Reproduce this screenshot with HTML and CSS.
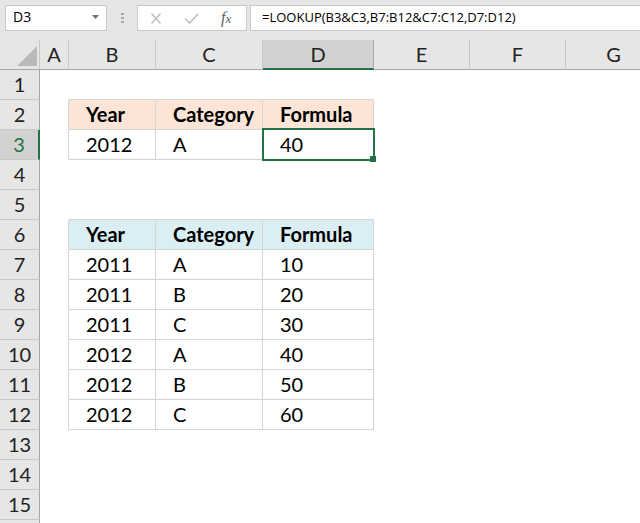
FILE: index.html
```html
<!DOCTYPE html>
<html>
<head>
<meta charset="utf-8">
<link rel="stylesheet" href="styles.css">
</head>
<body>
<div class="toolbar">
  <div class="namebox"><span>D3</span><svg class="caret" width="7" height="4" viewBox="0 0 7 4"><path d="M0 0h7L3.5 4z" fill="#707070"/></svg></div>
  <div class="grip"><i></i><i></i><i></i></div>
  <div class="fxbox">
    <svg class="ico-x" width="12" height="11" viewBox="0 0 12 11"><path d="M1.5 0.5l9 10M10.5 0.5l-9 10" stroke="#bdbdbd" stroke-width="1.4" fill="none"/></svg>
    <svg class="ico-check" width="15" height="11" viewBox="0 0 15 11"><path d="M1 5.5l4.5 4.5L14 1" stroke="#bdbdbd" stroke-width="1.6" fill="none"/></svg>
    <span class="fx">f<span class="fxx">x</span></span>
  </div>
  <div class="formula">=LOOKUP(B3&amp;C3,B7:B12&amp;C7:C12,D7:D12)</div>
</div>
<div class="sheet">
  <div class="corner"><svg width="20" height="20" viewBox="0 0 20 20"><path d="M20 0V20H0z" fill="#b9b9b9"/></svg></div>
  <div class="ch">A</div><div class="ch">B</div><div class="ch">C</div><div class="ch sel">D</div><div class="ch">E</div><div class="ch">F</div><div class="ch">G</div>

  <div class="rh">1</div><div></div><div class="tt"></div><div class="tt"></div><div class="tt"></div><div></div><div></div><div></div>

  <div class="rh">2</div><div class="tl"></div><div class="t th1">Year</div><div class="t th1">Category</div><div class="t th1">Formula</div><div></div><div></div><div></div>

  <div class="rh sel">3</div><div class="tl"></div><div class="t">2012</div><div class="t">A</div><div class="t active">40<span class="selbox"><span class="handle"></span></span></div><div></div><div></div><div></div>

  <div class="rh">4</div><div></div><div></div><div></div><div></div><div></div><div></div><div></div>

  <div class="rh">5</div><div></div><div class="tt"></div><div class="tt"></div><div class="tt"></div><div></div><div></div><div></div>

  <div class="rh">6</div><div class="tl"></div><div class="t th2">Year</div><div class="t th2">Category</div><div class="t th2">Formula</div><div></div><div></div><div></div>

  <div class="rh">7</div><div class="tl"></div><div class="t">2011</div><div class="t">A</div><div class="t">10</div><div></div><div></div><div></div>

  <div class="rh">8</div><div class="tl"></div><div class="t">2011</div><div class="t">B</div><div class="t">20</div><div></div><div></div><div></div>

  <div class="rh">9</div><div class="tl"></div><div class="t">2011</div><div class="t">C</div><div class="t">30</div><div></div><div></div><div></div>

  <div class="rh">10</div><div class="tl"></div><div class="t">2012</div><div class="t">A</div><div class="t">40</div><div></div><div></div><div></div>

  <div class="rh">11</div><div class="tl"></div><div class="t">2012</div><div class="t">B</div><div class="t">50</div><div></div><div></div><div></div>

  <div class="rh">12</div><div class="tl"></div><div class="t">2012</div><div class="t">C</div><div class="t">60</div><div></div><div></div><div></div>

  <div class="rh">13</div><div></div><div></div><div></div><div></div><div></div><div></div><div></div>

  <div class="rh">14</div><div></div><div></div><div></div><div></div><div></div><div></div><div></div>

  <div class="rh">15</div><div></div><div></div><div></div><div></div><div></div><div></div><div></div>

  <div class="rh"></div><div></div><div></div><div></div><div></div><div></div><div></div><div></div>
</div>
</body>
</html>
```

FILE: styles.css
```css
* { box-sizing: border-box; }

html, body {
  margin: 0;
  padding: 0;
  background: #fff;
  overflow: hidden;
}

body {
  width: 640px;
  height: 523px;
  font-family: Lato, "Liberation Sans", sans-serif;
  color: #000;
}

/* ---------- formula bar ---------- */
.toolbar {
  display: flex;
  align-items: flex-start;
  height: 40px;
  padding-top: 5px;
  background: #e6e6e6;
}

.namebox {
  display: flex;
  align-items: center;
  width: 102px;
  height: 26px;
  margin-left: 5px;
  padding: 0 7px 2px 7px;
  background: #fff;
  border: 1px solid #c8c8c8;
  font-family: "Open Sans", "Noto Sans", sans-serif;
  font-size: 14px;
  line-height: 22px;
}

.caret { margin-left: auto; }

.grip {
  display: flex;
  flex-direction: column;
  align-items: center;
  gap: 2px;
  width: 30px;
  padding-top: 8px;
}

.grip i {
  display: block;
  width: 3px;
  height: 2px;
  background: #a8a8a8;
}

.fxbox {
  display: flex;
  align-items: center;
  width: 110px;
  height: 26px;
  background: #fff;
  border: 1px solid #c8c8c8;
}

.ico-x { margin-left: 12px; }
.ico-check { margin-left: 22px; }

.fx {
  margin-left: 22px;
  font-family: "Liberation Serif", serif;
  font-style: italic;
  font-size: 16px;
  line-height: 16px;
  color: #5e5e5e;
}

.fxx { font-size: 13px; }

.formula {
  flex: 1;
  height: 26px;
  margin-left: 3px;
  padding-left: 11px;
  background: #fff;
  border: 1px solid #c8c8c8;
  border-right: none;
  font-family: "Open Sans", "Noto Sans", sans-serif;
  font-size: 13px;
  line-height: 23px;
  white-space: nowrap;
}

/* ---------- sheet grid ---------- */
.sheet {
  display: grid;
  grid-template-columns: 40px 29px 87px 107px 111px 96px 96px 96px;
  grid-auto-rows: 30px;
  font-size: 20px;
  line-height: 29px;
}

.sheet > div {
  border-right: 1px solid transparent;
  border-bottom: 1px solid transparent;
  white-space: nowrap;
}

.sheet > .corner {
  display: flex;
  justify-content: flex-end;
  align-items: flex-end;
  padding: 0 2px 3px 0;
  background: #e6e6e6;
  border-right-color: #c8c8c8;
  border-bottom-color: #a6a6a6;
}

.sheet > .ch {
  text-align: center;
  background: #e6e6e6;
  color: #222;
  border-right-color: #c8c8c8;
  border-bottom-color: #a6a6a6;
}

.sheet > .ch.sel {
  background: #d2d2d2;
  border-bottom: 2px solid #217346;
  border-right-color: #a6a6a6;
}

.sheet > .rh {
  text-align: center;
  background: #e6e6e6;
  color: #222;
  border-right-color: #a6a6a6;
  border-bottom-color: #c8c8c8;
}

.sheet > .rh.sel {
  background: #d2d2d2;
  color: #217346;
  border-right: 2px solid #217346;
}

/* table borders */
.sheet > .tt { border-bottom-color: #d4d4d4; }
.sheet > .tl { border-right-color: #d4d4d4; }

.sheet > .t {
  padding-left: 17px;
  border-right-color: #d4d4d4;
  border-bottom-color: #d4d4d4;
}

.sheet > .th1 { background: #fce4d6; font-weight: 700; }
.sheet > .th2 { background: #daeef3; font-weight: 700; }

.sheet > .active { position: relative; }

.selbox {
  position: absolute;
  top: -2px;
  left: -1px;
  right: -2px;
  bottom: -2px;
  border: 2px solid #217346;
}

.handle {
  position: absolute;
  right: -3px;
  bottom: -3px;
  width: 6px;
  height: 6px;
  background: #217346;
}
```
